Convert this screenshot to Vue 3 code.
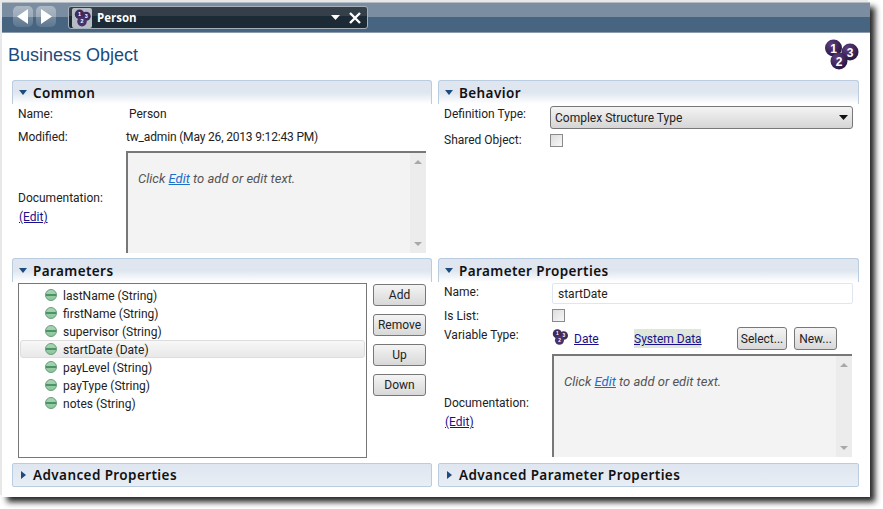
<script setup>
const params = [
  { label: 'lastName (String)' },
  { label: 'firstName (String)' },
  { label: 'supervisor (String)' },
  { label: 'startDate (Date)', selected: true },
  { label: 'payLevel (String)' },
  { label: 'payType (String)' },
  { label: 'notes (String)' }
]
const buttons = ['Add', 'Remove', 'Up', 'Down']
</script>

<template>
  <div class="page">
  <div class="window">
    <header class="topbar">
      <div class="nav">
        <button class="nav-btn" aria-label="Back"><svg width="12" height="15" viewBox="0 0 12 15"><path d="M11 0v15L0 7.500z" fill="#fff" /></svg></button>
        <button class="nav-btn" aria-label="Forward"><svg width="12" height="15" viewBox="0 0 12 15"><path d="M1 0v15l11-7.500z" fill="#fff" /></svg></button>
      </div>
      <div class="tab">
        <span class="tab-icon">
          <svg width="18" height="18" viewBox="0 0 30 30">
            <circle cx="11" cy="9" r="8" fill="#3f2a5c" /><circle cx="22" cy="12" r="7.500" fill="#3f2a5c" /><circle cx="15" cy="21" r="8" fill="#49326a" />
            <text x="11" y="12" class="ball-num">1</text><text x="22" y="15" class="ball-num">3</text><text x="15" y="24" class="ball-num">2</text>
          </svg>
        </span>
        <span class="tab-title">Person</span>
        <svg class="tab-caret" width="9" height="5" viewBox="0 0 9 5"><path d="M0 0h9L4.500 5z" fill="#fff" /></svg>
        <svg class="tab-close" width="12" height="12" viewBox="0 0 12 12"><path d="M1 1l10 10M11 1L1 11" stroke="#fff" stroke-width="2.400" /></svg>
      </div>
    </header>

    <div class="title-row">
      <h1>Business Object</h1>
      <svg class="logo" width="34" height="32" viewBox="0 0 34 32">
        <defs>
          <radialGradient id="ball" cx="0.35" cy="0.3" r="0.8"><stop offset="0" stop-color="#5f4080" /><stop offset="1" stop-color="#22113a" /></radialGradient>
          <linearGradient id="gem" x1="0" y1="0" x2="0" y2="1"><stop offset="0" stop-color="#a9d6b5" /><stop offset="1" stop-color="#8cc49c" /></linearGradient>
        </defs>
        <circle cx="8.500" cy="9" r="8.500" fill="url(#ball)" /><circle cx="25" cy="13" r="8.500" fill="url(#ball)" /><circle cx="14" cy="22" r="8.500" fill="url(#ball)" />
        <text x="8.500" y="13.500" class="logo-num">1</text><text x="25" y="17.500" class="logo-num">3</text><text x="14" y="26.500" class="logo-num">2</text>
      </svg>
    </div>

    <main class="grid">
      <section class="panel common">
        <div class="panel-head"><i class="tri-down"></i><span>Common</span></div>
        <div class="common-body">
          <div class="row name-row"><label>Name:</label><span class="person">Person</span></div>
          <div class="row mod-row"><label>Modified:</label><span class="mod-value">tw_admin (May 26, 2013 9:12:43 PM)</span></div>
          <div class="doc-row">
            <div class="doc-label"><label>Documentation:</label><a class="edit-link">(Edit)</a></div>
            <div class="doc-box">
              <div class="doc-text"><em>Click <a>Edit</a> to add or edit text.</em></div>
              <div class="scroll"><i class="sc-up"></i><i class="sc-down"></i></div>
            </div>
          </div>
        </div>
      </section>

      <section class="panel behavior">
        <div class="panel-head"><i class="tri-down"></i><span>Behavior</span></div>
        <div class="behavior-body">
          <div class="row def-row">
            <label>Definition Type:</label>
            <div class="select"><span>Complex Structure Type</span><svg width="9" height="5" viewBox="0 0 9 5"><path d="M0 0h9L4.500 5z" fill="#111" /></svg></div>
          </div>
          <div class="row shared-row"><label>Shared Object:</label><i class="check"></i></div>
        </div>
      </section>

      <section class="panel params">
        <div class="panel-head"><i class="tri-down"></i><span>Parameters</span></div>
        <div class="params-body">
          <ul class="list">
            <li v-for="p in params" :key="p.label" :class="{ selected: p.selected }">
              <svg width="12" height="12" viewBox="0 0 12 12">
                <circle cx="6" cy="6" r="5.500" fill="url(#gem)" stroke="#6a9c7b" />
                <rect x="1" y="5" width="10" height="2" fill="#4a9468" />
              </svg>
              <span>{{ p.label }}</span>
            </li>
          </ul>
          <div class="btns"><button v-for="b in buttons" :key="b" class="btn">{{ b }}</button></div>
        </div>
      </section>

      <section class="panel pprops">
        <div class="panel-head"><i class="tri-down"></i><span>Parameter Properties</span></div>
        <div class="pprops-body">
          <div class="row pname-row"><label>Name:</label><div class="input">startDate</div></div>
          <div class="row list-row"><label>Is List:</label><i class="check"></i></div>
          <div class="row var-row">
            <label>Variable Type:</label>
            <svg class="small-ball" width="16" height="16" viewBox="0 0 30 30">
              <circle cx="10" cy="9" r="8.500" fill="#3f2a5c" /><circle cx="22" cy="12" r="8" fill="#3f2a5c" /><circle cx="14" cy="21" r="8.500" fill="#49326a" />
              <text x="10" y="12" class="ball-num">1</text><text x="22" y="15" class="ball-num">3</text><text x="14" y="24" class="ball-num">2</text>
            </svg>
            <a class="date">Date</a>
            <a class="sys">System Data</a>
            <button class="btn small sel">Select...</button>
            <button class="btn small new">New...</button>
          </div>
          <div class="doc-row second">
            <div class="doc-label"><label>Documentation:</label><a class="edit-link">(Edit)</a></div>
            <div class="doc-box">
              <div class="doc-text"><em>Click <a>Edit</a> to add or edit text.</em></div>
              <div class="scroll"><i class="sc-up"></i><i class="sc-down"></i></div>
            </div>
          </div>
        </div>
      </section>

      <section class="panel closed"><div class="panel-head"><i class="tri-right"></i><span>Advanced Properties</span></div></section>
      <section class="panel closed"><div class="panel-head"><i class="tri-right"></i><span>Advanced Parameter Properties</span></div></section>
    </main>
  </div>
  </div>
</template>

<style>
html, body { margin: 0; background: #fff; }
</style>

<style scoped>
.page {
  width: 883px;
  height: 509px;
  box-sizing: border-box;
  padding: 2px 0 0 2px;
  overflow: hidden;
}
.window {
  width: 868px;
  height: 495px;
  background: #fff;
  box-shadow: -2px -2px 0 #e8e8e8, 5px 5px 6px rgba(0, 0, 0, .85);
  font: 12px/16px Roboto, "Noto Sans", sans-serif;
  color: #222;
  display: flex;
  flex-direction: column;
}
.topbar {
  height: 31px;
  box-sizing: border-box;
  display: flex;
  padding: 3px 0 0 11px;
  background: linear-gradient(#7b8da1 0, #7b8da1 48%, #476480 48%, #476480 100%);
  border-top: 1px solid #b4bcc4;
  border-bottom: 1px solid #8a9bac;
  flex: none;
}
.nav { display: flex; gap: 3px; }
.nav-btn {
  width: 20px; height: 21px; padding: 0; border: 0; border-radius: 5px;
  background: linear-gradient(rgba(255,255,255,.38), rgba(255,255,255,.12));
  display: flex; align-items: center; justify-content: center;
}
.tab {
  margin-left: 12px; width: 300px; height: 23px; box-sizing: border-box;
  border: 1px solid #a5b0bb; border-radius: 3px;
  background: linear-gradient(#343f4a 0, #343f4a 45%, #1c2a36 45%, #1c2a36 100%);
  display: flex; align-items: center; padding-left: 3px;
}
.tab-icon { width: 20px; height: 20px; background: #b5bcc4; display: flex; align-items: center; justify-content: center; border-radius: 2px; }
.tab-title { margin-left: 5px; color: #fff; font: bold 11.500px "Open Sans", sans-serif; flex: 1; }
.tab-caret { margin-right: 9px; }
.tab-close { margin-right: 6px; }
.ball-num { font: bold 9px "Liberation Sans", sans-serif; fill: #fff; text-anchor: middle; }
.logo-num { font: bold 12px "Liberation Sans", sans-serif; fill: #fff; text-anchor: middle; }

.title-row { height: 47px; display: flex; justify-content: space-between; padding: 6px 11px 0 6px; box-sizing: border-box; flex: none; }
h1 { margin: 1px 0 0; font: 18px "Liberation Sans", sans-serif; color: #1c4b7d; line-height: 30px; }
.logo { margin-top: 0; }

.grid {
  display: grid;
  grid-template-columns: 420px 421px;
  grid-template-rows: 178px 205px 24px;
  column-gap: 6px;
  padding-left: 10px;
}
.panel-head {
  height: 24px; box-sizing: border-box;
  border: 1px solid #b9cce0; border-bottom: 0; border-radius: 3px 3px 0 0;
  background: linear-gradient(#dfe6f0 0, #dfe6f0 50%, #fff 100%);
  display: flex; align-items: center; padding-left: 6px;
  font: 600 13.500px "Noto Sans", sans-serif; color: #111; letter-spacing: .4px;
}
.panel-head span { margin-left: 6px; }
.closed .panel-head { border-bottom: 1px solid #b9cce0; border-radius: 2px; background: linear-gradient(#dfe6f0, #e8eef5); }
.tri-down { width: 0; height: 0; border: 4px solid transparent; border-top: 5px solid #1c4b7d; border-bottom: 0; }
.tri-right { width: 0; height: 0; border: 4px solid transparent; border-left: 5px solid #1c4b7d; border-right: 0; margin-left: 2px; margin-right: 1px; }
.panel { min-width: 0; }

.row { display: flex; align-items: center; }
label { display: block; }
.common-body { padding: 0 6px; }
.name-row { height: 19px; }
.row > label { width: 108px; flex: none; }
.person { margin-left: 3px; }
.mod-row { height: 27px; }
.mod-value { letter-spacing: -.17px; }
.doc-row { display: flex; align-items: stretch; height: 102px; margin-top: 1px; }
.doc-label { width: 108px; flex: none; padding-top: 39px; box-sizing: border-box; }
.edit-link { display: block; margin: 3px 0 0 1px; color: #1a0f8c; text-decoration: underline; }
.doc-box {
  flex: 1; display: flex; background: #f3f3f3; box-sizing: border-box;
  border-top: 2px solid #777; border-left: 2px solid #777;
}
.doc-text { flex: 1; padding: 18px 0 0 10px; color: #555; font-size: 13px; }
.doc-text a { color: #1a6fc8; text-decoration: underline; }
.scroll { width: 16px; background: #ececec; position: relative; }
.sc-up, .sc-down { position: absolute; left: 4px; width: 0; height: 0; border: 4px solid transparent; }
.sc-up { top: 7px; border-top: 0; border-bottom: 4px solid #a8a8a8; }
.sc-down { bottom: 7px; border-bottom: 0; border-top: 4px solid #a8a8a8; }

.behavior-body { padding: 1px 6px 0; }
.def-row { height: 24px; }
.row.def-row > label { width: 106px; position: relative; top: -3px; }
.select {
  flex: 1; height: 23px; box-sizing: border-box; border: 1px solid #777; border-radius: 3px;
  background: linear-gradient(#f4f4f4, #d5d5d5); display: flex; align-items: center; justify-content: space-between; padding: 1px 4px 0;
}
.shared-row { height: 23px; }
.row.shared-row > label { width: 106px; position: relative; top: -1px; }
.check { width: 13px; height: 13px; box-sizing: border-box; border: 1px solid #8a8a8a; background: linear-gradient(135deg, #ddd, #f7f7f7); display: block; }

.params-body { display: flex; padding: 1px 6px 0; gap: 6px; }
.list { margin: 0; padding: 2px 0 0 1px; list-style: none; width: 349px; height: 175px; box-sizing: border-box; border: 1px solid #777; flex: none; }
.list li { height: 18px; display: flex; align-items: center; padding-left: 24px; box-sizing: border-box; width: 345px; border: 1px solid transparent; border-radius: 3px; }
.list li span { margin-left: 6px; padding-top: 1px; }
.list li.selected { background: linear-gradient(#f8f8f8, #e8e8e8); border-color: #ddd; }
.btns { display: flex; flex-direction: column; gap: 8px; width: 53px; padding-top: 1px; }
.btn {
  height: 22px; width: 53px; padding: 0; border: 1px solid #777; border-radius: 3px;
  background: linear-gradient(#f4f4f4, #d8d8d8); font: 12px Roboto, sans-serif; color: #222;
}
.pprops-body { padding: 1px 6px 0; }
.pname-row { height: 21px; }
.row.pname-row > label { position: relative; top: -2px; }
.input { flex: 1; height: 21px; box-sizing: border-box; border: 1px solid #dfe6f0; border-radius: 2px; padding-left: 5px; line-height: 21px; }
.list-row { height: 21px; margin-top: 1px; }
.var-row { height: 25px; }
.row.var-row > label { position: relative; top: -4px; }
.small-ball { flex: none; margin-top: -3px; }
.date, .sys { color: #1a0f8c; text-decoration: underline; white-space: nowrap; }
.date { margin-left: 6px; width: 54px; padding-top: 1px; }
.sys { margin-left: 6px; width: 67px; text-align: center; background: #dfe6da; padding: 2px 0 1px; }
.btn.small { height: 23px; }
.sel { width: 50px; margin-left: 36px; }
.new { width: 43px; margin-left: 7px; }
.doc-row.second { height: 103px; margin-top: 3px; }
.second .doc-label { padding-top: 41px; }
.second .doc-box { margin-right: 1px; }
</style>
